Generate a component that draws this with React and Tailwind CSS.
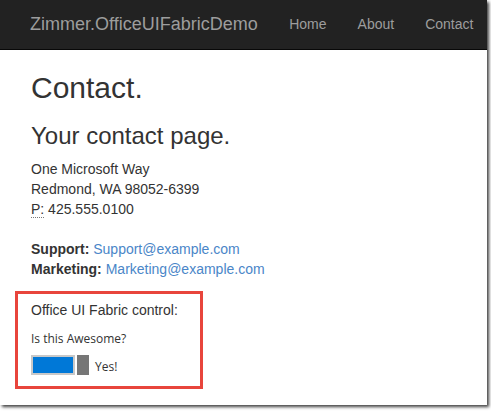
import React from 'react';

const NavBar = () => {
  const links = ['Home', 'About', 'Contact'];
  return (
    <div className="h-[50px] bg-[#222222] border-b border-[#080808] flex items-center pl-[30px]">
      <span className="text-[18px] text-[#9d9d9d] mr-[16px]">Zimmer.OfficeUIFabricDemo</span>
      <div className="flex">
        {links.map(link => (
          <span key={link} className="text-[14px] text-[#9d9d9d] px-[15.5px]">{link}</span>
        ))}
      </div>
    </div>
  );
};

const Toggle = () => (
  <div className="flex items-center mt-[6px]">
    <div className="w-[44px] h-[20px] border-2 border-[#c8c8c8] bg-[#0078d7]" />
    <div className="w-[12px] h-[20px] bg-[#767676] ml-[2px]" />
    <span className="ml-[6px] mt-[4px] text-[12px] text-[#333333] font-['Open_Sans',sans-serif]">Yes!</span>
  </div>
);

const App = () => {
  return (
    <div className="w-[491px] h-[411px] bg-white overflow-hidden font-['Liberation_Sans',Arial,sans-serif]">
      <div className="w-[487px] h-[405px] bg-white shadow-[2px_2px_3px_rgba(0,0,0,0.75)] overflow-hidden">
        <NavBar />
        <div className="pl-[31px] text-[#333333]">
          <h2 className="text-[30px] leading-[33px] mt-[21px]">Contact.</h2>
          <h3 className="text-[24px] leading-[26px] mt-[19px]">Your contact page.</h3>
          <address className="not-italic text-[14px] leading-[20px] mt-[10px]">
            One Microsoft Way<br />
            Redmond, WA 98052-6399<br />
            <abbr title="Phone" className="no-underline border-b border-dotted border-[#777]">P:</abbr> 425.555.0100
          </address>
          <address className="not-italic text-[14px] leading-[20px] mt-[20px]">
            <strong>Support:</strong> <a className="text-[#4a86c8]">Support@example.com</a><br />
            <strong>Marketing:</strong> <a className="text-[#4a86c8]">Marketing@example.com</a>
          </address>
        </div>
        <div className="ml-[15px] mt-[12px] w-[188px] h-[98px] border-[3px] border-[#e8453c] pl-[13px] pt-[6px]">
          <div className="text-[14px] text-[#333333]">Office UI Fabric control:</div>
          <div className="text-[12px] text-[#333333] mt-[9px] font-['Open_Sans',sans-serif]">Is this Awesome?</div>
          <Toggle />
        </div>
      </div>
    </div>
  );
};

export default App;
